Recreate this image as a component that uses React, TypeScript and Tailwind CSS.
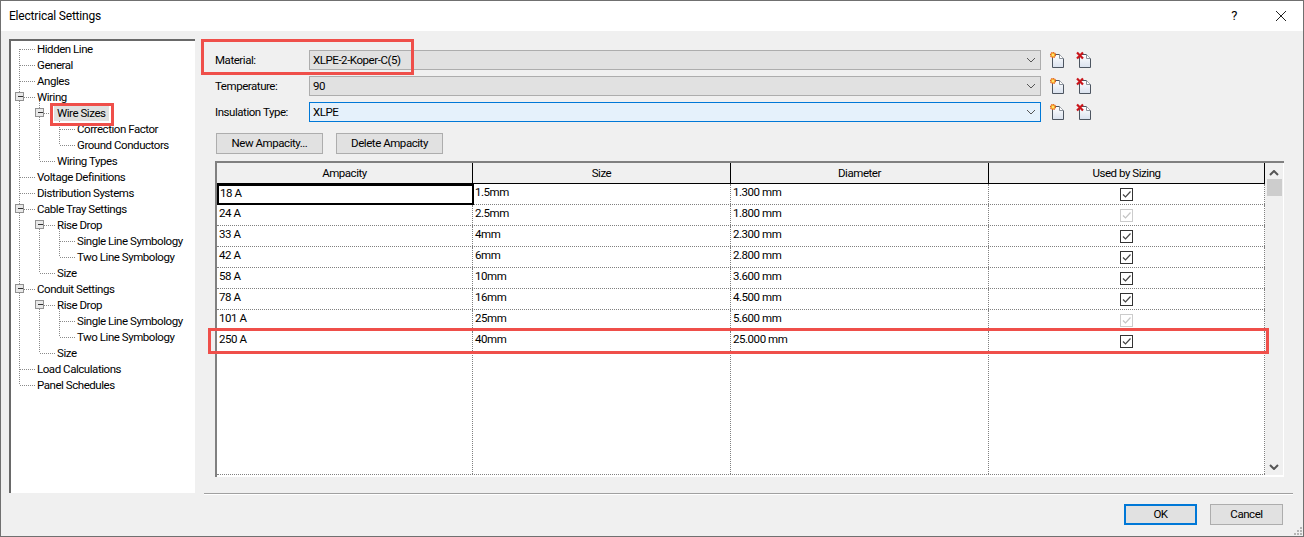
import React from 'react';

const font = "font-['Roboto',sans-serif]";

const treeRows: { label: string; level: number; selected?: boolean }[] = [
  { label: 'Hidden Line', level: 0 },
  { label: 'General', level: 0 },
  { label: 'Angles', level: 0 },
  { label: 'Wiring', level: 0 },
  { label: 'Wire Sizes', level: 1, selected: true },
  { label: 'Correction Factor', level: 2 },
  { label: 'Ground Conductors', level: 2 },
  { label: 'Wiring Types', level: 1 },
  { label: 'Voltage Definitions', level: 0 },
  { label: 'Distribution Systems', level: 0 },
  { label: 'Cable Tray Settings', level: 0 },
  { label: 'Rise Drop', level: 1 },
  { label: 'Single Line Symbology', level: 2 },
  { label: 'Two Line Symbology', level: 2 },
  { label: 'Size', level: 1 },
  { label: 'Conduit Settings', level: 0 },
  { label: 'Rise Drop', level: 1 },
  { label: 'Single Line Symbology', level: 2 },
  { label: 'Two Line Symbology', level: 2 },
  { label: 'Size', level: 1 },
  { label: 'Load Calculations', level: 0 },
  { label: 'Panel Schedules', level: 0 },
];

const wireRows = [
  { amp: '18 A', size: '1.5mm', dia: '1.300 mm', used: true },
  { amp: '24 A', size: '2.5mm', dia: '1.800 mm', used: false },
  { amp: '33 A', size: '4mm', dia: '2.300 mm', used: true },
  { amp: '42 A', size: '6mm', dia: '2.800 mm', used: true },
  { amp: '58 A', size: '10mm', dia: '3.600 mm', used: true },
  { amp: '78 A', size: '16mm', dia: '4.500 mm', used: true },
  { amp: '101 A', size: '25mm', dia: '5.600 mm', used: false },
  { amp: '250 A', size: '40mm', dia: '25.000 mm', used: true },
];

// connector lines and +/- boxes of the tree, coordinates inside the tree box
const TreeLines = () => {
  const lines = [
    'M8.5 8V344', 'M8.5 8H24', 'M8.5 24H24', 'M8.5 40H24', 'M8.5 56H24', 'M8.5 136H24', 'M8.5 152H24',
    'M8.5 168H24', 'M8.5 248H24', 'M8.5 328H24', 'M8.5 344H24',
    'M28.5 60V120', 'M28.5 120H44', 'M48.5 80V104', 'M48.5 88H64', 'M48.5 104H64',
    'M28.5 188V232', 'M28.5 232H44', 'M28.5 184H44', 'M48.5 188V216', 'M48.5 200H64', 'M48.5 216H64',
    'M28.5 268V312', 'M28.5 312H44', 'M28.5 264H44', 'M48.5 268V296', 'M48.5 280H64', 'M48.5 296H64',
    'M28.5 72H44',
  ];
  const boxes: [number, number][] = [[8.5, 56], [28.5, 72], [8.5, 168], [28.5, 184], [8.5, 248], [28.5, 264]];
  return (
    <svg className="absolute left-0 top-0" width="100" height="360" shapeRendering="crispEdges">
      {lines.map((d, i) => (
        <path key={i} d={d} stroke="#8a8a8a" strokeDasharray="1 1" fill="none" />
      ))}
      {boxes.map(([x, y], i) => (
        <g key={i}>
          <rect x={x - 4} y={y - 4.5} width="8" height="8" fill="#e8e8e8" stroke="#919191" />
          <path d={`M${x - 2} ${y - 0.5}H${x + 3}`} stroke="#333" />
        </g>
      ))}
    </svg>
  );
};

const DocIcon = ({ kind }: { kind: 'new' | 'delete' }) => (
  <svg width="20" height="20" viewBox="0 0 20 20" className="block">
    <defs>
      <linearGradient id={`doc-${kind}`} x1="0" y1="0" x2="0" y2="1">
        <stop offset="0" stopColor="#ffffff" />
        <stop offset="1" stopColor="#d9e1ee" />
      </linearGradient>
    </defs>
    <path d="M5.5 4.5H12.5L16.5 8.5V17.5H5.5Z" fill={`url(#doc-${kind})`} stroke="#4d5560" />
    <path d="M12.5 4.5V8.5H16.5" fill="#fff" stroke="#8b929c" />
    {kind === 'new' ? (
      <g>
        <circle cx="6" cy="5" r="2.4" fill="#fbd23a" stroke="#e2541a" strokeWidth="1.3" strokeDasharray="1.2 0.5" />
        <circle cx="6" cy="5" r="0.9" fill="#ffe98a" />
      </g>
    ) : (
      <path d="M3 2.5L9 8.5M9 2.5L3 8.5" stroke="#c9151b" strokeWidth="2.2" />
    )}
  </svg>
);

const Combo = ({ value, active }: { value: string; active?: boolean }) => (
  <div
    className={`w-[732px] h-[20px] shrink-0 flex items-center justify-between pl-[3px] pr-[4px] border ${
      active ? 'bg-[#e5f1fb] border-[#0078d7]' : 'bg-[#e1e1e1] border-[#adadad]'
    }`}
  >
    <span className="leading-none mt-[1px]">{value}</span>
    <svg width="10" height="6" viewBox="0 0 10 6">
      <path d="M1 1L5 5L9 1" stroke="#555" fill="none" />
    </svg>
  </div>
);

const SettingRow = ({ label, value, active }: { label: string; value: string; active?: boolean }) => (
  <div className="flex items-center h-[20px]">
    <span className="w-[105px] shrink-0 pl-[11px] pt-[2px] whitespace-nowrap">{label}</span>
    <Combo value={value} active={active} />
    <div className="flex items-center ml-[6px] gap-[7px]">
      <DocIcon kind="new" />
      <DocIcon kind="delete" />
    </div>
  </div>
);

const Check = ({ on }: { on: boolean }) => (
  <span className={`block w-[13px] h-[13px] border ${on ? 'border-[#333] ' : 'border-[#cccccc]'}`}>
    <svg width="11" height="11" viewBox="0 0 11 11" className="block">
      <path d="M2 5.5L4.5 8L9.5 2.5" stroke={on ? '#444' : '#c4c4c4'} strokeWidth="1.2" fill="none" />
    </svg>
  </span>
);

const Button = ({ children, className }: { children: React.ReactNode; className?: string }) => (
  <div className={`flex items-center justify-center pt-[1px] bg-[#e1e1e1] border border-[#adadad] h-[21px] ${className ?? ''}`}>
    {children}
  </div>
);

const columns = 'grid grid-cols-[256px_258px_258px_276px]';
const cell = 'border-r border-dotted border-[#808080]';

const WireGrid = () => (
  <div className="relative w-[1069px] h-[316px] mt-[7px] ml-[11px] border-l-2 border-t-2 border-[#808080] bg-[#f0f0f0]">
    <div className="flex h-[312px]">
      <div className="w-[1048px] bg-white flex flex-col">
        <div className={`${columns} h-[21px] bg-[#f0f0f0] border-b border-black`}>
          {['Ampacity', 'Size', 'Diameter', 'Used by Sizing'].map((h) => (
            <div key={h} className="flex items-center justify-center pt-[1px] border-r border-black">
              {h}
            </div>
          ))}
        </div>
        {wireRows.map((r, i) => (
          <div key={r.amp} className={`${columns} h-[21px] border-b border-dotted border-[#808080]`}>
            <div
              className={`leading-[14px] ${
                i === 0 ? 'pl-[1px] border-2 border-black -mr-[1px] -mb-[1px]' : `${cell} pl-[2px] pt-[1px]`
              }`}
            >
              {r.amp}
            </div>
            <div className={`${cell} pl-[2px] pt-[1px] leading-[15px]`}>{r.size}</div>
            <div className={`${cell} pl-[2px] pt-[1px] leading-[15px]`}>{r.dia}</div>
            <div className={`${cell} flex items-center justify-center pt-[1px]`}>
              <Check on={r.used} />
            </div>
          </div>
        ))}
        <div className={`${columns} flex-1 border-b border-dotted border-[#808080]`}>
          <div className={cell} />
          <div className={cell} />
          <div className={cell} />
          <div className={cell} />
        </div>
      </div>
      <div className="w-[18px] relative flex flex-col items-center">
        <svg width="10" height="6" viewBox="0 0 10 6" className="mt-[7px]">
          <path d="M1 5L5 1L9 5" stroke="#555" strokeWidth="2" fill="none" />
        </svg>
        <div className="w-[15px] h-[17px] bg-[#cdcdcd] mt-[3px]" />
        <svg width="10" height="6" viewBox="0 0 10 6" className="mt-auto mb-[5px]">
          <path d="M1 1L5 5L9 1" stroke="#555" strokeWidth="2" fill="none" />
        </svg>
      </div>
    </div>
    <div className="h-[2px] w-[1067px] bg-white" />
    <div className="absolute right-0 top-0 w-[1px] h-[314px] bg-white" />
  </div>
);

export default function App() {
  return (
    <div
      className={`relative w-[1304px] h-[537px] overflow-hidden border border-[#707070] bg-white text-[11.5px] tracking-[-0.45px] text-black ${font} flex flex-col`}
    >
      <div className="h-[30px] shrink-0 flex items-center justify-between pl-[8px] pr-[16px]">
        <span className="text-[12px] tracking-[-0.2px]">Electrical Settings</span>
        <div className="flex items-center gap-[38px]">
          <span className="text-[13px]">?</span>
          <svg width="12" height="12" viewBox="0 0 12 12">
            <path d="M1 1L11 11M11 1L1 11" stroke="#222" fill="none" />
          </svg>
        </div>
      </div>

      <div className="flex-1 flex bg-[#f0f0f0] pt-[8px] pl-[8px]">
        <div className="relative w-[186px] h-[454px] shrink-0 bg-white border-l-2 border-t-2 border-[#696969]">
          <TreeLines />
          {treeRows.map((t, i) => (
            <div
              key={i}
              className={`h-[16px] flex items-center whitespace-nowrap ${
                t.level === 0 ? 'pl-[26px]' : t.level === 1 ? 'pl-[46px]' : 'pl-[66px]'
              }`}
            >
              <span className={`relative leading-[16px] ${t.selected ? 'bg-[#e0e0e0] px-[3px] -ml-[3px]' : ''}`}>
                {t.label}
              </span>
            </div>
          ))}
        </div>

        <div className="w-[1089px] ml-[9px] flex flex-col">
          <div className="pt-[11px] flex flex-col gap-[6px]">
            <SettingRow label="Material:" value="XLPE-2-Koper-C(5)" />
            <SettingRow label="Temperature:" value="90" />
            <SettingRow label="Insulation Type:" value="XLPE" active />
          </div>
          <div className="flex gap-[13px] mt-[11px] ml-[12px]">
            <Button className="w-[107px]">New Ampacity...</Button>
            <Button className="w-[107px]">Delete Ampacity</Button>
          </div>
          <WireGrid />
          <div className="mt-[16px] h-[2px] border-t border-[#a0a0a0] border-b-white border-b" />
          <div className="flex justify-end gap-[13px] mt-[9px] pr-[10px]">
            <Button className="w-[73px] !h-[21px] !border-2 !border-[#0078d7]">OK</Button>
            <Button className="w-[73px]">Cancel</Button>
          </div>
        </div>
      </div>

      {/* annotation boxes drawn over the dialog */}
      <div className="absolute left-[49px] top-[102px] w-[64px] h-[23px] border-[3px] border-[#ef4f4a]" />
      <div className="absolute left-[200px] top-[38px] w-[213px] h-[36px] border-[3px] border-[#ef4f4a]" />
      <div className="absolute left-[207px] top-[327px] w-[1061px] h-[26px] border-[3px] border-[#ef4f4a]" />

      <svg className="absolute right-0 bottom-0" width="10" height="10" viewBox="0 0 10 10">
        <path d="M7 1h2v2H7zM4 4h2v2H4zM7 4h2v2H7zM1 7h2v2H1zM4 7h2v2H4zM7 7h2v2H7z" fill="#b5b5b5" />
      </svg>
    </div>
  );
}
